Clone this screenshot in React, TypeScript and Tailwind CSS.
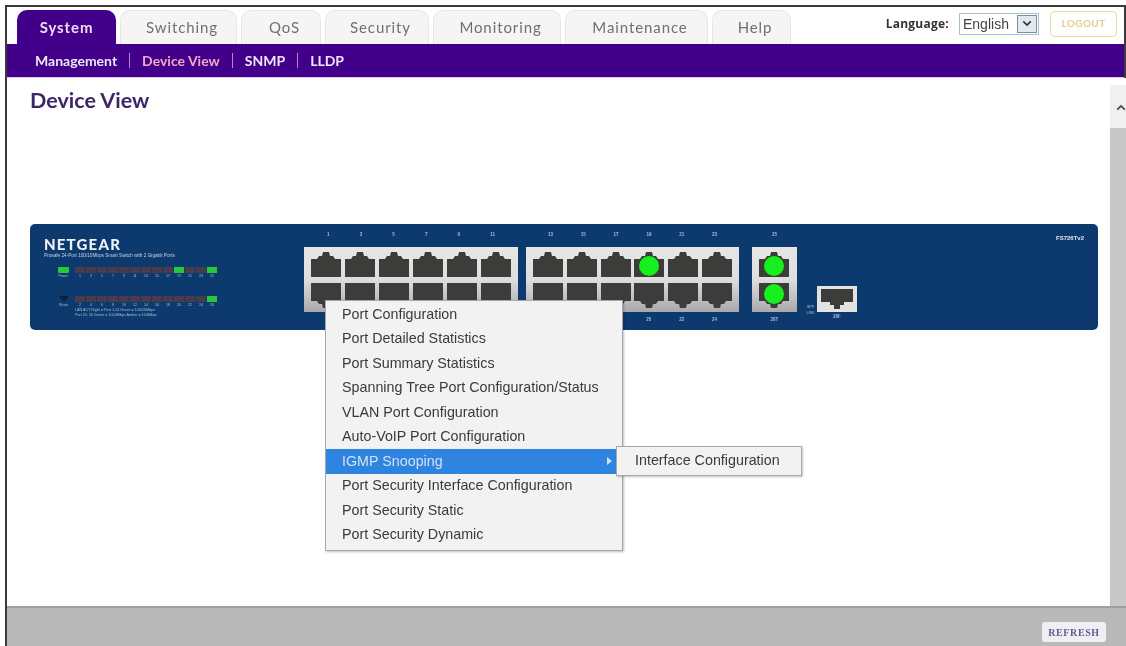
const tabs = [
  { name: 'System', w: 'w-[99px]', active: true },
  { name: 'Switching', w: 'w-[117px]' },
  { name: 'QoS', w: 'w-[80px]' },
  { name: 'Security', w: 'w-[104px]' },
  { name: 'Monitoring', w: 'w-[128px]' },
  { name: 'Maintenance', w: 'w-[143px]' },
  { name: 'Help', w: 'w-[79px]' },
];

const subNav = ['Management', 'Device View', 'SNMP', 'LLDP'];

const menuItems = [
  'Port Configuration',
  'Port Detailed Statistics',
  'Port Summary Statistics',
  'Spanning Tree Port Configuration/Status',
  'VLAN Port Configuration',
  'Auto-VoIP Port Configuration',
  'IGMP Snooping',
  'Port Security Interface Configuration',
  'Port Security Static',
  'Port Security Dynamic',
];

const Port = ({ flip, on }: { flip?: boolean; on?: boolean }) => (
  <svg viewBox="0 0 30 25" className="h-[25px] w-[30px]">
    <path
      d={flip ? 'M0 0H30V18H24L22 21H19L18 25H12L11 21H8L6 18H0Z' : 'M0 25H30V7H24L22 4H19L18 0H12L11 4H8L6 7H0Z'}
      fill="#3c3c3a"
    />
    {on && <circle cx="15" cy={flip ? 11 : 14} r="10" fill="#16f01e" />}
  </svg>
);

// bottom labels that sit under the context menu are left empty
const PortPanel = ({ top, bottom, lit = [], width }: { top: string[]; bottom: string[]; lit?: number[]; width: string }) => (
  <div className={`flex flex-col ${width}`}>
    <div className="flex h-[23px] items-center justify-around px-[8px] text-[4.5px] font-bold text-[#a9bed6]">
      {top.map((n) => (
        <span key={n}>{n}</span>
      ))}
    </div>
    <div className="flex h-[65px] flex-col justify-center gap-[6px] bg-gradient-to-b from-[#e6e6e4] via-[#dedede] to-[#a9a9ad] px-[7px]">
      <div className="flex justify-between">
        {top.map((n, i) => (
          <Port key={n} on={lit.includes(i)} />
        ))}
      </div>
      <div className="flex justify-between">
        {top.map((n, i) => (
          <Port key={n} flip on={lit.includes(i + 100)} />
        ))}
      </div>
    </div>
    <div className="flex h-[16px] items-center justify-around px-[8px] text-[4.5px] font-bold text-[#a9bed6]">
      {bottom.map((n, i) => (
        <span key={i} className="min-w-[5px]">
          {n}
        </span>
      ))}
    </div>
  </div>
);

const LedRow = ({ label, nums, lit, power }: { label: string; nums: string[]; lit: number[]; power?: boolean }) => (
  <div className="flex items-start">
    <div className="flex w-[31px] flex-col items-center pl-[8px]">
      {power ? (
        <div className="h-[6px] w-[11px] rounded-[1px] bg-[#25c93a]" />
      ) : (
        <div className="h-0 w-0 border-x-[5px] border-t-[6px] border-x-transparent border-t-[#0a2238]" />
      )}
      <span className="text-[3.5px] leading-[6px] text-[#a9bdd4]">{label}</span>
    </div>
    <div className="flex flex-col">
      <div className="flex gap-px">
        {nums.map((n, i) => (
          <div key={n} className={`h-[6px] w-[10px] ${lit.includes(i) ? 'bg-[#25c93a]' : 'bg-[#4b3a4a]'}`} />
        ))}
      </div>
      <div className="flex gap-px">
        {nums.map((n) => (
          <span key={n} className="w-[10px] text-center text-[3.5px] leading-[6px] text-[#a9bdd4]">
            {n}
          </span>
        ))}
      </div>
    </div>
  </div>
);

export default function App() {
  return (
    <div className="h-[646px] w-[1126px] overflow-hidden bg-white pl-[5px] pt-[5px] blur-[0.6px]">
      <div className="flex h-full flex-col border-l-2 border-t-2 border-[#3a3a3a]">
        <div className="border-r-2 border-[#3a3a3a]">
          {/* Tabs */}
          <div className="flex h-[37px] items-end pl-[10px] pr-[7px]">
            <div className="flex gap-[4px] [font-family:Lato,sans-serif]">
              {tabs.map((tab) => (
                <div
                  key={tab.name}
                  className={`${tab.w} flex h-[34px] items-center justify-center rounded-t-[10px] text-[15px] tracking-[0.06em] ${
                    tab.active
                      ? 'bg-[#42008a] font-bold text-[#efdcf5]'
                      : 'border border-b-0 border-[#e6e6e6] bg-[#f5f5f5] pl-[7px] text-[#6f7072]'
                  }`}
                >
                  {tab.name}
                </div>
              ))}
            </div>
            <div className="ml-auto flex h-full items-center pb-[4px]">
              <span className="mr-[10px] text-[12px] font-bold tracking-[0.02em] text-[#333] [font-family:'Open_Sans',sans-serif]">
                Language:
              </span>
              <div className="flex h-[22px] w-[80px] items-center justify-between border border-[#a8c0c8] pl-[3px] pr-[1px] text-[14px] leading-none text-[#444] [font-family:'Liberation_Sans',sans-serif]">
                English
                <span className="flex h-[18px] w-[20px] items-center justify-center border border-[#7d8da0] bg-[#e4e9f0]">
                  <svg viewBox="0 0 12 8" className="h-[7px] w-[10px]">
                    <path d="M1.5 1.5L6 6L10.5 1.5" fill="none" stroke="#334" strokeWidth="2" />
                  </svg>
                </span>
              </div>
              <div className="ml-[11px] flex h-[26px] w-[67px] items-center justify-center rounded-[4px] border border-[#ecdca4] text-[10px] font-bold tracking-[0.04em] text-[#e6cf8a] [font-family:Lato,sans-serif]">
                LOGOUT
              </div>
            </div>
          </div>

          {/* Purple sub nav */}
          <div className="flex h-[34px] items-center border-b border-[#e7c8f5] bg-[#42008a] pl-[28px] text-[14px] font-bold [font-family:Lato,sans-serif]">
            {subNav.map((item, i) => (
              <div key={item} className="flex items-center">
                {i > 0 && <span className="mx-[12px] h-[15px] w-px bg-[#a98acb]" />}
                <span className={item === 'Device View' ? 'text-[#f0a8c4]' : 'text-[#efe4f8]'}>{item}</span>
              </div>
            ))}
          </div>
        </div>

        {/* Main */}
        <div className="flex min-h-0 flex-1">
          <div className="relative flex-1">
            <h1 className="ml-[23px] mt-[10px] text-[21.5px] font-bold leading-[24px] text-[#3f2468] [font-family:Lato,sans-serif]">
              Device View
            </h1>

            {/* Switch */}
            <div className="ml-[23px] mt-[112px] flex h-[106px] w-[1068px] rounded-[5px] bg-[#0d3a6e] [font-family:'Liberation_Sans',sans-serif]">
              <div className="w-[274px] pl-[14px] pt-[13px]">
                <div className="text-[15px] font-black leading-[15px] tracking-[0.08em] text-[#eef2f6] [font-family:Lato,sans-serif]">
                  NETGEAR
                </div>
                <div className="whitespace-nowrap text-[4.7px] leading-[8px] text-[#c3d2e2]">
                  Prosafe 24-Port 100/10Mbps Smart Switch with 2 Gigabit Ports
                </div>
                <div className="mt-[7px] flex flex-col gap-[17px]">
                  <LedRow power label="Power" nums={['1', '3', '5', '7', '9', '11', '13', '15', '17', '19', '21', '23', '25']} lit={[9, 12]} />
                  <LedRow label="Reset" nums={['2', '4', '6', '8', '10', '12', '14', '16', '18', '20', '22', '24', '26']} lit={[12]} />
                </div>
                <div className="ml-[31px] whitespace-nowrap text-[3.7px] leading-[5px] text-[#a9bdd4]">
                  <div>LAN ACT Right = Port 1-24 Green = 100/10Mbps</div>
                  <div>Port 25, 26 Green = 1000Mbps Amber = 100Mbps</div>
                </div>
              </div>

              <PortPanel width="w-[214px]" top={['1', '3', '5', '7', '9', '11']} bottom={['', '', '', '', '', '']} />
              <div className="w-[8px]" />
              <PortPanel width="w-[213px]" top={['13', '15', '17', '19', '21', '23']} bottom={['', '', '', '20', '22', '24']} lit={[3]} />
              <div className="w-[13px]" />
              <PortPanel width="w-[45px]" top={['25']} bottom={['26T']} lit={[0, 100]} />

              <div className="ml-[9px] mt-[62px] flex h-[38px] flex-col items-start">
                <div className="flex">
                  <div className="mr-[2px] mt-[18px] flex w-[9px] flex-col items-center text-[3.7px] leading-[6px] text-[#a9bdd4]">
                    <span>SPF</span>
                    <span>LINK</span>
                  </div>
                  <div className="flex flex-col items-center">
                    <div className="flex h-[26px] w-[40px] items-center justify-center bg-[#e2e2e0]">
                      <svg viewBox="0 0 32 20" className="h-[20px] w-[32px]">
                        <path d="M0 0H32V13H23V16H19V20H13V16H9V13H0Z" fill="#3c3c3a" />
                      </svg>
                    </div>
                    <span className="mt-[2px] text-[4.5px] font-bold text-[#a9bed6]">26F</span>
                  </div>
                </div>
              </div>

              <div className="ml-auto pr-[14px] pt-[10px] text-[6px] font-bold text-[#e2e9f0]">FS726Tv2</div>
            </div>

            {/* Context menu */}
            <div className="absolute left-[318px] top-[222px] w-[298px] border border-[#a8a8a8] bg-[#f2f2f2] pb-[3px] pt-px text-[14.3px] text-[#3a3a3a] shadow-[1px_1px_2px_rgba(0,0,0,0.25)] [font-family:'Liberation_Sans',sans-serif]">
              {menuItems.map((item) => (
                <div
                  key={item}
                  className={`flex h-[24.5px] items-center justify-between pl-[16px] pr-[10px] ${
                    item === 'IGMP Snooping' ? 'bg-[#2f84e0] text-[#cfe2f6]' : ''
                  }`}
                >
                  {item}
                  {item === 'IGMP Snooping' && <span className="h-0 w-0 border-y-[4px] border-l-[5px] border-y-transparent border-l-[#cfe2f6]" />}
                </div>
              ))}
            </div>

            {/* Submenu */}
            <div className="absolute left-[609px] top-[368px] flex h-[30px] w-[186px] items-center border border-[#a8a8a8] bg-[#f2f2f2] pl-[18px] text-[14.3px] text-[#3a3a3a] shadow-[1px_1px_2px_rgba(0,0,0,0.25)] [font-family:'Liberation_Sans',sans-serif]">
              Interface Configuration
            </div>
          </div>

          {/* Scrollbar */}
          <div className="mt-[7px] flex w-[16px] flex-col">
            <div className="flex h-[43px] items-center justify-center bg-[#f0f0f0] pt-[2px]">
              <svg viewBox="0 0 12 8" className="ml-[6px] h-[7px] w-[12px]">
                <path d="M1.5 6.5L6 2L10.5 6.5" fill="none" stroke="#444" strokeWidth="2" />
              </svg>
            </div>
            <div className="flex-1 bg-[#c8c8c8]" />
          </div>
        </div>

        {/* Footer */}
        <div className="flex h-[40px] items-end justify-end border-t-2 border-[#a0a0a0] bg-[#b9b9b9] pb-[4px] pr-[20px]">
          <div className="flex h-[20px] w-[64px] items-center justify-center rounded-[3px] bg-[#eeeef4] text-[10px] font-bold tracking-[0.06em] text-[#5d5d8e] [font-family:'Liberation_Serif',serif]">
            REFRESH
          </div>
        </div>
      </div>
    </div>
  );
}
